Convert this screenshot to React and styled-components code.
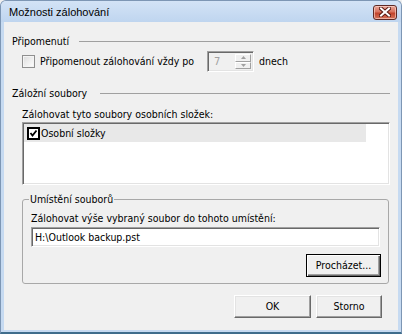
import React from "react";
import styled, { createGlobalStyle, css } from "styled-components";

const Global = createGlobalStyle`
  html, body { margin: 0; padding: 0; background: #f0f0f0; }
  body { font-family: "DejaVu Sans Condensed", "DejaVu Sans", Tahoma, sans-serif; font-size: 10.5px; color: #000; }
  * { box-sizing: border-box; }
`;

const Window = styled.div`
  width: 402px;
  height: 334px;
  display: flex;
  flex-direction: column;
  border: 1px solid #7d96b4;
  border-bottom: 2px solid #3f6d8c;
  border-radius: 6px 6px 0 0;
  background: #c6daf1;
  overflow: hidden;
`;

const TitleBar = styled.div`
  height: 21px;
  display: flex;
  align-items: center;
  justify-content: space-between;
  padding: 0 4px 0 8px;
  background: linear-gradient(#d3e3f6, #bfd5ef);
`;

const Title = styled.span`
  font-family: "Liberation Sans", Arial, sans-serif;
  font-size: 11px;
  line-height: 14px;
  color: #000;
`;

const CloseBtn = styled.div`
  width: 24px;
  height: 15px;
  margin-top: 1px;
  display: flex;
  align-items: center;
  justify-content: center;
  border: 1px solid #5e2a25;
  border-radius: 3px;
  background: linear-gradient(#e9a597 0%, #d8735f 45%, #c2432b 55%, #d5745c 100%);
  box-shadow: inset 0 0 0 1px rgba(255, 220, 210, 0.6);
`;

const Frame = styled.div`
  flex: 1;
  display: flex;
  padding: 0 4px 2px 3px;
`;

const Client = styled.div`
  flex: 1;
  background: #f0f0f0;
  display: flex;
  flex-direction: column;
  padding: 13px 8px 0 8px;
`;

const Heading = styled.div`
  display: flex;
  align-items: center;
  height: 13px;
  margin-top: ${(p) => p.$mt || 0}px;
`;

const HeadingText = styled.span`
  width: ${(p) => p.$w}px;
  flex: none;
  white-space: nowrap;
  line-height: 13px;
`;

const HeadingLine = styled.div`
  flex: 1;
  height: 1px;
  background: #a0a0a0;
`;

const CheckRow = styled.div`
  display: flex;
  align-items: center;
  height: 21px;
  margin-top: 3px;
  padding-left: 10px;
`;

const CheckBox = styled.div`
  width: 13px;
  height: 13px;
  flex: none;
  border: 1px solid #8f8f8f;
  background: linear-gradient(135deg, #dcdcdc, #ffffff);
  box-shadow: inset 0 0 0 1px #f4f4f4;
`;

const CheckLabel = styled.span`
  width: ${(p) => p.$w}px;
  flex: none;
  white-space: nowrap;
  padding-left: 5px;
  line-height: 13px;
`;

const sunken = css`
  border: 1px solid;
  border-color: #a0a0a0 #ffffff #ffffff #a0a0a0;
  box-shadow: inset 1px 1px 0 #696969, inset -1px -1px 0 #e3e3e3;
`;

const Spin = styled.div`
  ${sunken};
  width: 47px;
  height: 21px;
  display: flex;
  background: #f0f0f0;
  padding: 2px;
`;

const SpinValue = styled.span`
  flex: 1;
  color: #a0a0a0;
  padding-left: 4px;
  line-height: 15px;
  font-size: 11px;
`;

const SpinButtons = styled.div`
  width: 16px;
  display: flex;
  flex-direction: column;
`;

const SpinBtn = styled.div`
  flex: 1;
  display: flex;
  align-items: center;
  justify-content: center;
  background: #f0f0f0;
  border: 1px solid;
  border-color: #ffffff #a0a0a0 #a0a0a0 #ffffff;
`;

const AfterSpin = styled.span`
  padding-left: 5px;
  line-height: 13px;
`;

const Label = styled.div`
  line-height: 13px;
  margin-top: ${(p) => p.$mt || 0}px;
  margin-left: ${(p) => p.$ml || 0}px;
  white-space: nowrap;
`;

const ListBox = styled.div`
  ${sunken};
  width: 368px;
  height: 63px;
  margin-top: 1px;
  margin-left: 10px;
  background: #ffffff;
  padding: 1px 0 0 1px;
`;

const ListItem = styled.div`
  width: 342px;
  height: 18px;
  display: flex;
  align-items: center;
  padding-left: 3px;
  gap: 1px;
  background: ${(p) => (p.$selected ? "#e8e8e8" : "transparent")};
`;

const ItemText = styled.span`
  line-height: 13px;
`;

const Group = styled.fieldset`
  width: 367px;
  margin: 8px 0 0 10px;
  padding: 0 7px 6px 8px;
  border: 1px solid #a8a8a8;
  border-radius: 3px;
  min-width: 0;
`;

const Legend = styled.legend`
  padding: 0 1px;
  margin-left: -2px;
  line-height: 13px;
`;

const TextInput = styled.div`
  ${sunken};
  width: 349px;
  height: 20px;
  margin-top: 2px;
  background: #ffffff;
  padding: 2px 3px;
  line-height: 14px;
`;

const ButtonRow = styled.div`
  display: flex;
  justify-content: flex-end;
  gap: ${(p) => p.$gap || 0}px;
  margin-top: ${(p) => p.$mt || 0}px;
  padding-right: ${(p) => p.$pr || 0}px;
`;

const Button = styled.div`
  width: ${(p) => p.$w}px;
  height: 23px;
  display: flex;
  align-items: center;
  justify-content: center;
  background: #f0f0f0;
  border: 1px solid;
  border-color: ${(p) => (p.$default ? "#000" : "#fff #696969 #696969 #fff")};
  box-shadow: ${(p) =>
    p.$default
      ? "inset 1px 1px 0 #fff, inset -1px -1px 0 #696969, inset -2px -2px 0 #a0a0a0"
      : "inset -1px -1px 0 #a0a0a0, inset 1px 1px 0 #e3e3e3"};
  line-height: 13px;
`;

const CloseIcon = () => (
  <svg width="12" height="10" viewBox="0 0 12 10">
    <path d="M2 1.5 L10 8.5 M10 1.5 L2 8.5" stroke="#5a1c14" strokeWidth="4" strokeLinecap="square" />
    <path d="M2 1.5 L10 8.5 M10 1.5 L2 8.5" stroke="#ffffff" strokeWidth="2" strokeLinecap="square" />
  </svg>
);

const Arrow = ({ up }) => (
  <svg width="5" height="3" viewBox="0 0 5 3">
    <path d={up ? "M0 3 L2.5 0 L5 3 Z" : "M0 0 L2.5 3 L5 0 Z"} fill="#a0a0a0" />
  </svg>
);

const CheckedBox = () => (
  <svg width="13" height="13" viewBox="0 0 13 13" style={{ flex: "none" }}>
    <rect x="1" y="1" width="11" height="11" fill="#fff" stroke="#000" strokeWidth="2" />
    <path d="M3.5 6 L5.5 8.5 L9.5 3.5" fill="none" stroke="#000" strokeWidth="1.8" />
  </svg>
);

export default function App() {
  return (
    <>
      <Global />
      <Window>
        <TitleBar>
          <Title>Možnosti zálohování</Title>
          <CloseBtn>
            <CloseIcon />
          </CloseBtn>
        </TitleBar>
        <Frame>
          <Client>
            <Heading>
              <HeadingText $w={67}>Připomenutí</HeadingText>
              <HeadingLine />
            </Heading>
            <CheckRow>
              <CheckBox />
              <CheckLabel $w={172}>Připomenout zálohování vždy po</CheckLabel>
              <Spin>
                <SpinValue>7</SpinValue>
                <SpinButtons>
                  <SpinBtn>
                    <Arrow up />
                  </SpinBtn>
                  <SpinBtn>
                    <Arrow />
                  </SpinBtn>
                </SpinButtons>
              </Spin>
              <AfterSpin>dnech</AfterSpin>
            </CheckRow>
            <Heading $mt={15}>
              <HeadingText $w={88}>Záložní soubory</HeadingText>
              <HeadingLine />
            </Heading>
            <Label $mt={8} $ml={10}>Zálohovat tyto soubory osobních složek:</Label>
            <ListBox>
              <ListItem $selected>
                <CheckedBox />
                <ItemText>Osobní složky</ItemText>
              </ListItem>
            </ListBox>
            <Group>
              <Legend>Umístění souborů</Legend>
              <Label $mt={6}>Zálohovat výše vybraný soubor do tohoto umístění:</Label>
              <TextInput>H:\Outlook backup.pst</TextInput>
              <ButtonRow $mt={7}>
                <Button $w={75} $default>Procházet...</Button>
              </ButtonRow>
            </Group>
            <ButtonRow $mt={11} $gap={5} $pr={8}>
              <Button $w={77}>OK</Button>
              <Button $w={66}>Storno</Button>
            </ButtonRow>
          </Client>
        </Frame>
      </Window>
    </>
  );
}
